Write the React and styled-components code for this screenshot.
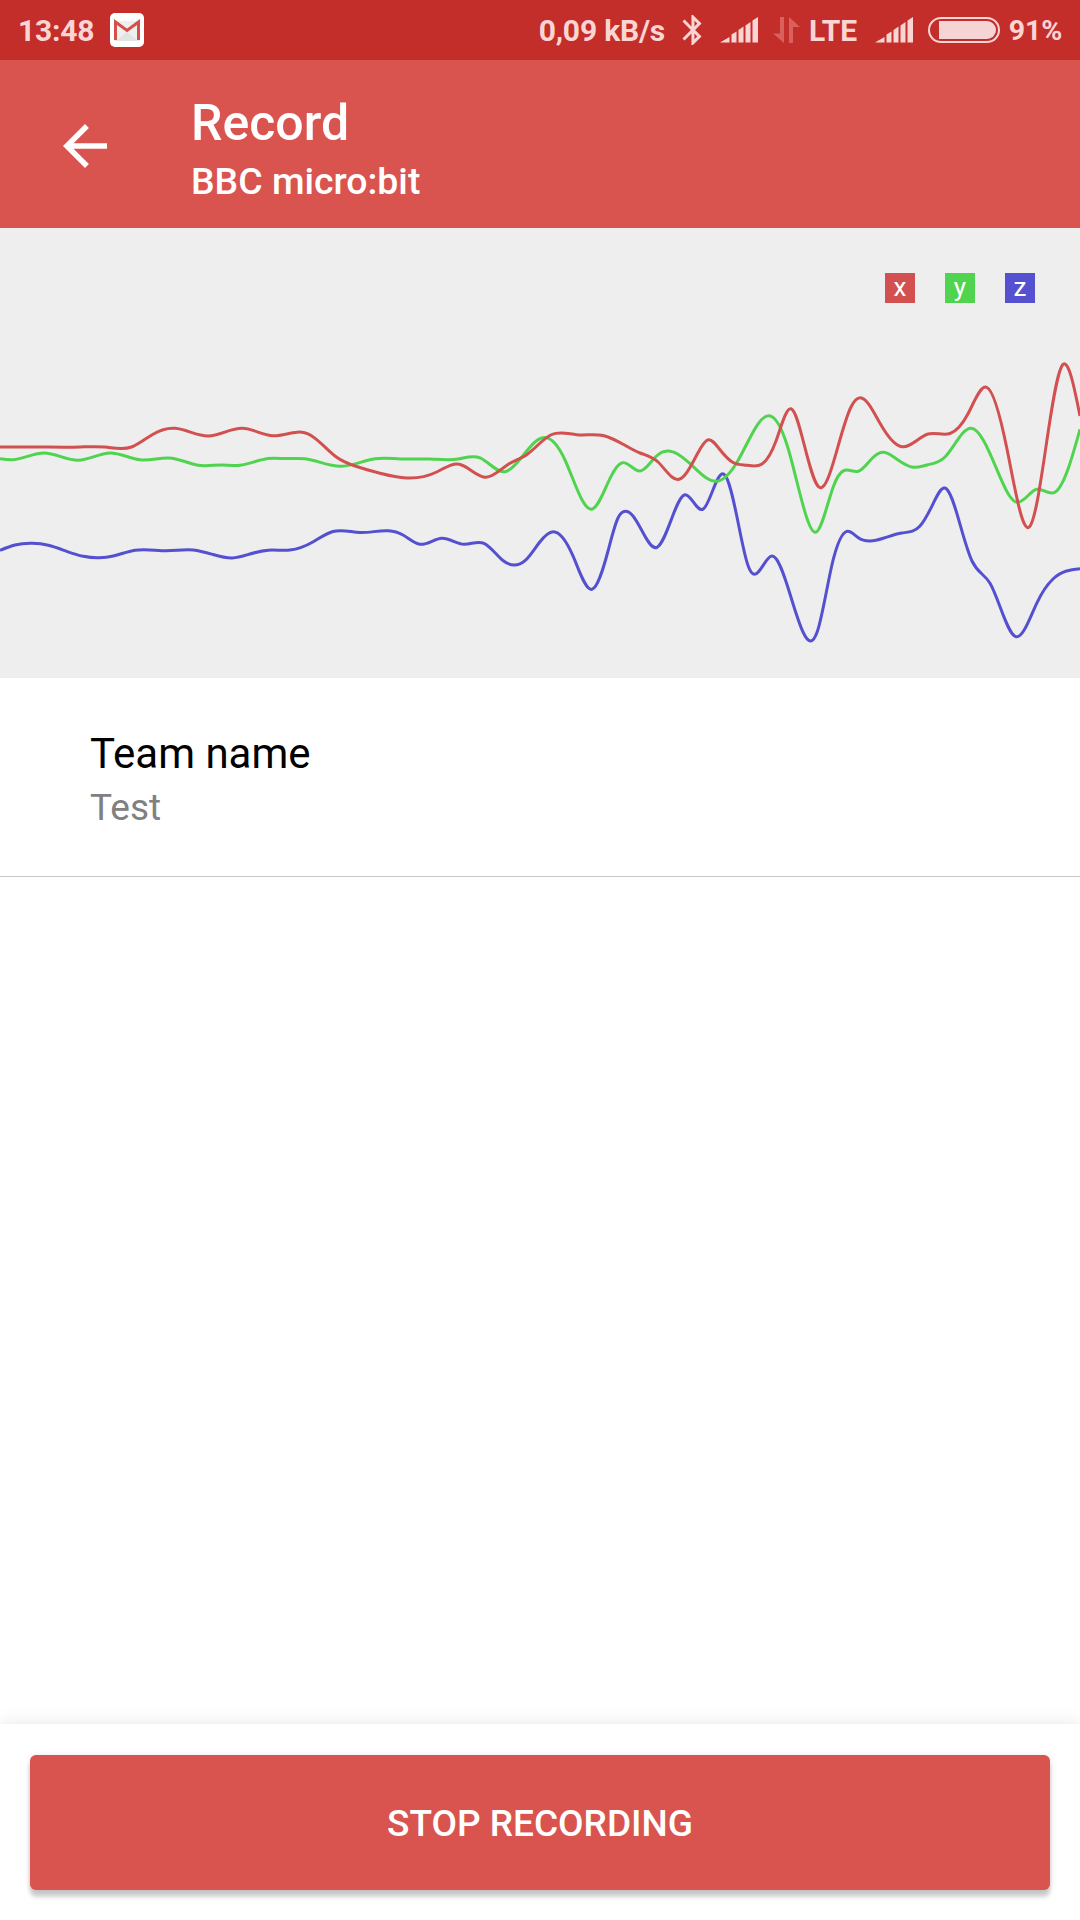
import React from 'react';
import styled, { createGlobalStyle } from 'styled-components';

const AXES = [
  {
    name: 'z',
    color: '#5450d0',
    points:
      '0,550.3 15,545 32.3,543.3 48.3,545.3 66.7,551.3 83.3,556.3 99.3,557.8 113.3,556 135,550.2 166.7,550.7 193.3,550 213,554.5 232.3,558 250,554 268.3,550.2 290,550 313.3,541.7 333,531.5 360,532.5 388.3,530.8 403,535 420,544.3 441.7,538.3 464,544.3 484,543.3 503.3,560.7 514.3,565 525,560.7 539,543 553.3,531.7 573.3,556.7 592,589.3 608.3,550 618,518 625.3,511.3 633,516 643.3,533.3 657,547.3 671.7,518.5 685,494.7 703.3,509 724,474.3 738,522 748,565.5 754.3,574.3 771.7,556 790,594 803,632 810.3,641 817.5,631 831.7,566 847.3,531.3 858,537.5 870,541 883.3,538.3 901.7,533 920,526 933.3,503.3 945,488 958.3,518.3 972,561 990,583.3 1016,636.7 1036.7,603.3 1053,579 1080,568.7',
  },
  {
    name: 'y',
    color: '#50d450',
    points:
      '0,458.7 13.3,459.7 44,453 78.3,460.3 110,453 140,459.7 172,458.2 198,465.2 221.7,465 240,465.3 268,458.5 286,458.6 305,458.8 340,466.3 375,458.8 400,458.9 430,459 458.3,459 480,457.8 505,471.7 521.7,457.3 542.7,437.7 565,460 592.3,509 610,478.3 622.3,462.7 640,471 656,456.5 667.3,451 678.3,454.5 693.3,466.7 716.7,481.3 738.3,460 769.3,415.7 788,448 806.5,517 815.7,532.3 833.3,486.7 844,470.5 858.3,471.3 873,457.500 883.3,452.3 893,456.5 913.3,467.3 927,465 945,457 971,428.3 996,467.5 1008,493.5 1017,502.3 1036.7,489.3 1055,492.3 1068.3,468.3 1080,429.3',
  },
  {
    name: 'x',
    color: '#d25050',
    points:
      '0,447 40,447 80,447 105,447 131.5,447 153,434.2 175,428.3 208.3,436 242.3,428.3 273,435.8 308,433.8 336.7,457.3 355,466 380,473.3 406.7,478 436.7,472 459.3,464.3 486,477.3 508.3,464.3 526.7,454.7 551.7,434.5 576.7,434.7 604,435.7 640,453 658,462 679,479.3 697,454.5 708.3,439.7 719,448.5 733,462.5 747,465.3 762,464 776,441 791,408.7 804,444 819.3,487.3 839,443 851,407 860.3,397.7 880,423.3 901.7,446.7 928,434 950,433.5 968.3,413.3 986.7,387.3 1007,449 1020,511 1029.3,527 1046.7,441.7 1063.3,364.3 1080,416',
  },
];

const LEGEND = [...AXES].reverse();

// natural cubic spline through all the samples
const toPath = (points) => {
  const p = points.split(' ').map((pair) => pair.split(',').map(Number));
  const last = p.length - 1;
  const h = p.slice(1).map(([x], i) => x - p[i][0]);
  const s = p.slice(1).map(([, y], i) => (y - p[i][1]) / h[i]);

  // tridiagonal solve for the slope at each sample
  const upper = [0.5];
  const slope = [1.5 * s[0]];
  for (let i = 1; i <= last; i++) {
    const end = i === last;
    const a = end ? 1 : h[i];
    const b = end ? 2 : 2 * (h[i - 1] + h[i]);
    const c = end ? 0 : h[i - 1];
    const r = end ? 3 * s[i - 1] : 3 * (h[i] * s[i - 1] + h[i - 1] * s[i]);
    const w = b - a * upper[i - 1];
    upper[i] = c / w;
    slope[i] = (r - a * slope[i - 1]) / w;
  }
  for (let i = last - 1; i >= 0; i--) {
    slope[i] -= upper[i] * slope[i + 1];
  }

  return p.slice(1).reduce((d, [x, y], i) => {
    const [px, py] = p[i];
    const third = h[i] / 3;
    const c1 = (py + slope[i] * third).toFixed(2);
    const c2 = (y - slope[i + 1] * third).toFixed(2);
    return `${d} C${px + third},${c1} ${x - third},${c2} ${x},${y}`;
  }, `M${p[0]}`);
};

const GmailIcon = () => (
  <svg width='34' height='34' viewBox='0 0 34 34'>
    <rect width='34' height='34' rx='5' fill='#fff' />
    <path d='M4 8h26v20H4z' fill='#efefef' />
    <path d='M6 28l11-9 11 9z' fill='#e2e4e3' />
    <path d='M5.500 27V9L17 17.500 28.500 9V27' fill='none' stroke='#d5504a' strokeWidth='3' />
  </svg>
);

const BluetoothIcon = () => (
  <svg width='20' height='30' viewBox='5 2 12.710 20' fill='#fbd5d3'>
    <path d='M17.710 7.710L12 2h-1v7.590L6.410 5 5 6.410 10.590 12 5 17.590 6.410 19 11 14.410V22h1l5.710-5.710-4.300-4.290 4.300-4.290zM13 5.830l1.880 1.880L13 9.590V5.830zm1.880 10.460L13 18.170v-3.760l1.880 1.880z' />
  </svg>
);

const SignalIcon = () => (
  <svg width='38' height='26' viewBox='0 0 38 26' fill='#fbd5d3'>
    <path d='M0 25.500L9.500 20v5.500z' />
    <path d='M11.500 17.500l5-3V25.500h-5z' />
    <path d='M18.500 13l5-3.500V25.500h-5z' />
    <path d='M25.500 8.500l5-3.500V25.500h-5z' />
    <path d='M32.500 3.500L38 0V25.500h-5.500z' />
  </svg>
);

const DataArrowsIcon = () => (
  <svg width='27' height='26' viewBox='0 0 27 26' fill='#d9605d'>
    <path d='M7 0h4v26L0 16.500h7z' />
    <path d='M20 26h-4V0l11 10h-7z' />
  </svg>
);

const BatteryIcon = () => (
  <svg width='72' height='26' viewBox='0 0 72 26'>
    <rect x='1' y='1' width='70' height='24' rx='12' fill='none' stroke='#fbd5d3' strokeWidth='2' />
    <path d='M11 4h48a9 9 0 0 1 0 18H11z' fill='#f5d5d4' />
  </svg>
);

const BackIcon = () => (
  <svg width='66' height='66' viewBox='0 0 24 24' fill='#fff'>
    <path d='M20 11H7.830l5.590-5.590L12 4l-8 8 8 8 1.410-1.410L7.830 13H20v-2z' />
  </svg>
);

const App = () => (
  <Screen>
    <GlobalStyle />
    <StatusBar>
      <StatusText>13:48</StatusText>
      <IconSlot $left={16}>
        <GmailIcon />
      </IconSlot>
      <StatusRight>
        <StatusText>0,09 kB/s</StatusText>
        <IconSlot $left={17}>
          <BluetoothIcon />
        </IconSlot>
        <IconSlot $left={18}>
          <SignalIcon />
        </IconSlot>
        <IconSlot $left={15}>
          <DataArrowsIcon />
        </IconSlot>
        <StatusText $left={9}>LTE</StatusText>
        <IconSlot $left={18}>
          <SignalIcon />
        </IconSlot>
        <IconSlot $left={15}>
          <BatteryIcon />
        </IconSlot>
        <StatusText $left={9} $size={28.5}>
          91%
        </StatusText>
      </StatusRight>
    </StatusBar>
    <AppBar>
      <BackButton aria-label='Back'>
        <BackIcon />
      </BackButton>
      <div>
        <Title>Record</Title>
        <Subtitle>BBC micro:bit</Subtitle>
      </div>
    </AppBar>
    <ChartPanel>
      <Chart viewBox='0 228 1080 450'>
        {AXES.map((axis) => (
          <path key={axis.name} d={toPath(axis.points)} stroke={axis.color} />
        ))}
      </Chart>
      <Legend>
        {LEGEND.map((axis) => (
          <LegendItem key={axis.name} $color={axis.color}>
            {axis.name}
          </LegendItem>
        ))}
      </Legend>
    </ChartPanel>
    <ListItem>
      <ItemLabel>Team name</ItemLabel>
      <ItemValue>Test</ItemValue>
    </ListItem>
    <Spacer />
    <Footer>
      <StopButton>STOP RECORDING</StopButton>
    </Footer>
  </Screen>
);

export default App;

const GlobalStyle = createGlobalStyle`
  body {
    margin: 0;
    background: #fff;
    font-family: Roboto, sans-serif;
  }
`;

const Screen = styled.div`
  display: flex;
  flex-direction: column;
  width: 1080px;
  height: 1920px;
  overflow: hidden;
`;

const StatusBar = styled.div`
  display: flex;
  align-items: center;
  box-sizing: border-box;
  height: 60px;
  padding: 0 18px;
  background: #c32e2a;
`;

const StatusRight = styled.div`
  display: flex;
  align-items: center;
  margin-left: auto;
`;

const StatusText = styled.span`
  margin-left: ${({ $left }) => $left || 0}px;
  padding-top: 1px;
  color: #fbd5d3;
  font-size: ${({ $size }) => $size || 30}px;
  font-weight: 700;
  letter-spacing: -0.2px;
  line-height: 59px;
  white-space: nowrap;
`;

const IconSlot = styled.span`
  display: flex;
  margin-left: ${({ $left }) => $left}px;
`;

const AppBar = styled.header`
  display: flex;
  box-sizing: border-box;
  height: 168px;
  padding: 33px 0 0 52px;
  background: #d9534f;
  color: #fff;
`;

const BackButton = styled.button`
  display: flex;
  width: 66px;
  height: 66px;
  margin: 20px 73px 0 0;
  padding: 0;
  border: 0;
  background: none;
`;

const Title = styled.h1`
  margin: 0;
  font-size: 50px;
  font-weight: 500;
  line-height: 60px;
`;

const Subtitle = styled.h2`
  margin: 6px 0 0;
  font-size: 37.400px;
  font-weight: 500;
  line-height: 44px;
`;

const ChartPanel = styled.div`
  position: relative;
  height: 450px;
  background: #eee;
`;

const Chart = styled.svg`
  display: block;
  width: 1080px;
  height: 450px;
  fill: none;
  stroke-width: 3;
`;

const Legend = styled.div`
  position: absolute;
  top: 45px;
  right: 45px;
  display: flex;
  gap: 30px;
`;

const LegendItem = styled.span`
  width: 30px;
  height: 30px;
  background: ${({ $color }) => $color};
  color: #fff;
  font-size: 26px;
  line-height: 28px;
  text-align: center;
`;

const ListItem = styled.div`
  box-sizing: border-box;
  height: 199px;
  padding: 51px 90px 0;
  border-bottom: 1px solid #c8c8c8;
`;

const ItemLabel = styled.div`
  color: #000;
  font-size: 42px;
  line-height: 50px;
`;

const ItemValue = styled.div`
  margin-top: 7px;
  color: #808080;
  font-size: 37px;
  line-height: 44px;
`;

const Spacer = styled.div`
  flex: 1;
`;

const Footer = styled.footer`
  box-sizing: border-box;
  height: 196px;
  padding: 31px 30px 30px;
  background: #fff;
  box-shadow: 0 0 18px rgba(0, 0, 0, 0.1);
`;

const StopButton = styled.button`
  width: 100%;
  height: 135px;
  padding: 2px 0 0;
  border: 0;
  border-radius: 6px;
  background: #d9534f;
  box-shadow: 0 7px 4px rgba(0, 0, 0, 0.18), 0 1px 6px rgba(0, 0, 0, 0.12);
  color: #fff;
  font-family: inherit;
  font-size: 37px;
  font-weight: 500;
`;
